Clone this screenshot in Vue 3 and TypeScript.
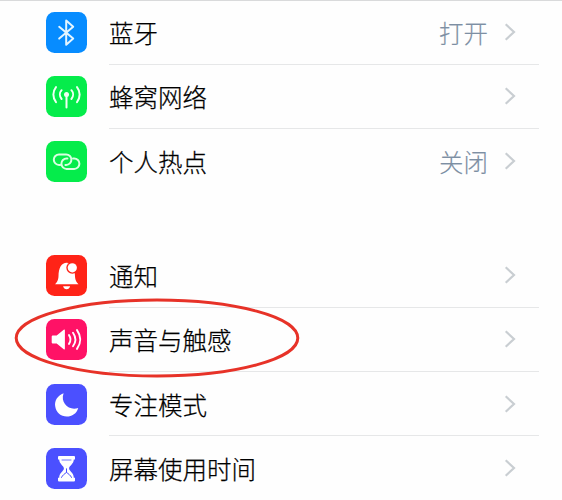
<script setup lang="ts">
type IconName = 'bluetooth' | 'cellular' | 'hotspot' | 'bell' | 'sound' | 'moon' | 'hourglass'

interface SettingItem {
  icon: IconName
  label: string
  value?: string
  circled?: boolean
}

const groups: SettingItem[][] = [
  [
    { icon: 'bluetooth', label: '蓝牙', value: '打开' },
    { icon: 'cellular', label: '蜂窝网络' },
    { icon: 'hotspot', label: '个人热点', value: '关闭' },
  ],
  [
    { icon: 'bell', label: '通知' },
    { icon: 'sound', label: '声音与触感', circled: true },
    { icon: 'moon', label: '专注模式' },
    { icon: 'hourglass', label: '屏幕使用时间' },
  ],
]
</script>

<template>
  <main class="settings">
    <ul v-for="(group, g) in groups" :key="g" class="group">
      <li v-for="item in group" :key="item.icon" class="row">
        <svg class="icon" :class="item.icon" viewBox="0 0 41 41" fill="none" stroke-linecap="round" stroke-linejoin="round">
          <path v-if="item.icon === 'bluetooth'" d="M13.2 14.8 27.2 26.6 20.2 32.8V8.6L27.2 14.8 13.2 26.6" stroke="#e4f5ff" stroke-width="2" />
          <template v-else-if="item.icon === 'cellular'">
            <circle cx="20.5" cy="18.6" r="2.5" fill="#f1fff4" />
            <path d="M20.5 19v12.5" stroke="#f1fff4" stroke-width="2" />
            <path d="M15.6 14.2a6.6 6.6 0 0 0 0 8.800M25.4 14.2a6.6 6.6 0 0 1 0 8.800M10 11.100a12 12 0 0 0 0 15M31 11.100a12 12 0 0 1 0 15" stroke="#f1fff4" stroke-width="2" />
          </template>
          <g v-else-if="item.icon === 'hotspot'" stroke="#d9ffe2" stroke-width="2">
            <path d="M14.2 23.900h-1.200a5.200 5.200 0 0 1 0-10.400h7.200a5.200 5.200 0 0 1 0 10.400h-.8" />
            <path d="M27 17.500h1.200a5.200 5.200 0 0 1 0 10.400h-7.600a5.200 5.200 0 0 1 0-10.400h.8" />
          </g>
          <template v-else-if="item.icon === 'bell'">
            <path d="M9.1 29.3c1.700-2 3.300-3.800 3.400-8.200.1-8.200 3-13.400 8.200-13.400 5.400 0 8.200 5.200 8.300 13.400.1 4.400 1.700 6.200 3.500 8.200z" fill="#fff" />
            <path d="M17.1 31.200h7c-.5 2-1.700 3-3.500 3s-3-1-3.500-3z" fill="#fff" />
            <circle cx="26.3" cy="12.8" r="6" fill="#ff2317" />
            <circle cx="26.3" cy="12.8" r="4.6" fill="#fff" />
          </template>
          <template v-else-if="item.icon === 'sound'">
            <path d="M6.7 16.600h4l7-5.800q1.200-.7 1.200.6v18.200q0 1.300-1.200.6l-7-5.800h-4q-1 0-1-1v-5.800q0-1 1-1z" fill="#fff" />
            <path d="M23 16.100q3 4.400 0 8.800M27 13.700q4.800 6.800 0 13.600M31 11.100q6.600 9.400 0 18.800" stroke="#fff" stroke-width="1.9" />
          </template>
          <path v-else-if="item.icon === 'moon'" d="M17.6 9.300C11.500 11.700 8.400 16.800 9.200 22.200c.8 6.300 5.700 10.300 11.500 10.300 5.400 0 10-3.100 11.500-8.600-8.600 3.300-18.300-4.600-14.600-14.600z" fill="#fff" />
          <template v-else>
            <path d="M13 7.900h15q1 0 1 1v2.700h-1.200c0 4.500-4.700 6.300-4.700 8.900s4.700 4.300 4.700 9.300H29v2.700q0 1-1 1H13q-1 0-1-1v-2.700h1.200c0-5 4.700-6.700 4.700-9.300s-4.700-4.400-4.700-8.900H12V8.900q0-1 1-1z" fill="#fff" />
            <path d="M20.5 20.800v3.600c-2 1.500-4 2.800-5 5M20.500 24.400c2 1.500 4 2.800 5 5" stroke="#4b50ff" stroke-width="1" />
            <path d="M16 12h9" stroke="#4b50ff" stroke-width=".8" />
          </template>
        </svg>
        <div class="content">
          <span class="label">{{ item.label }}</span>
          <span v-if="item.value" class="value">{{ item.value }}</span>
          <svg class="chevron" viewBox="0 0 12 18" fill="none"><path d="M1.7 1.300 10 9l-8.300 7.700" stroke="#c9ced2" stroke-width="2.2" /></svg>
        </div>
        <svg v-if="item.circled" class="ring" viewBox="0 0 286 80" fill="none">
          <ellipse cx="143" cy="40" rx="140.8" ry="38" stroke="#e73228" stroke-width="3" />
        </svg>
      </li>
    </ul>
  </main>
</template>

<style>
body {
  background: #fefefe;
  overflow: hidden;
}
</style>

<style scoped>
.settings {
  box-sizing: border-box;
  height: 500px;
  overflow: hidden;
  border-top: 1px solid #d9dadb;
  font-family: "Noto Sans CJK SC", sans-serif;
  font-weight: 300;
  font-size: 24.5px;
  color: #000;
}
.group {
  list-style: none;
  margin: 0;
  padding: 0 23px 0 46px;
}
.group + .group {
  margin-top: 49.6px;
}
.row {
  position: relative;
  display: flex;
  align-items: center;
  gap: 22px;
  height: 64.4px;
}
.group:first-child .row:first-child {
  height: 63.8px;
}
.icon {
  flex: none;
  width: 41px;
  height: 41px;
  border-radius: 8.5px;
}
.bluetooth { background: #078cff; }
.cellular, .hotspot { background: #05ec4b; }
.bell { background: #ff2317; }
.sound { background: #ff1266; }
.moon, .hourglass { background: #4b50ff; }
.content {
  flex: 1;
  align-self: stretch;
  box-sizing: border-box;
  display: flex;
  align-items: center;
  border-bottom: 1px solid #e6e7e8;
}
.row:last-child .content {
  border-bottom-color: transparent;
}
.label {
  flex: 1;
  line-height: 36px;
  padding-top: 2px;
  -webkit-text-stroke: 0.25px currentColor;
}
.value {
  line-height: 36px;
  padding-top: 2px;
  color: #7d8fa3;
  -webkit-text-stroke: 0.15px currentColor;
}
.chevron {
  width: 12px;
  height: 18px;
  margin-left: 16px;
  margin-right: 23px;
}
.ring {
  position: absolute;
  left: -32px;
  top: -9.5px;
  width: 286px;
  height: 80px;
}
</style>
